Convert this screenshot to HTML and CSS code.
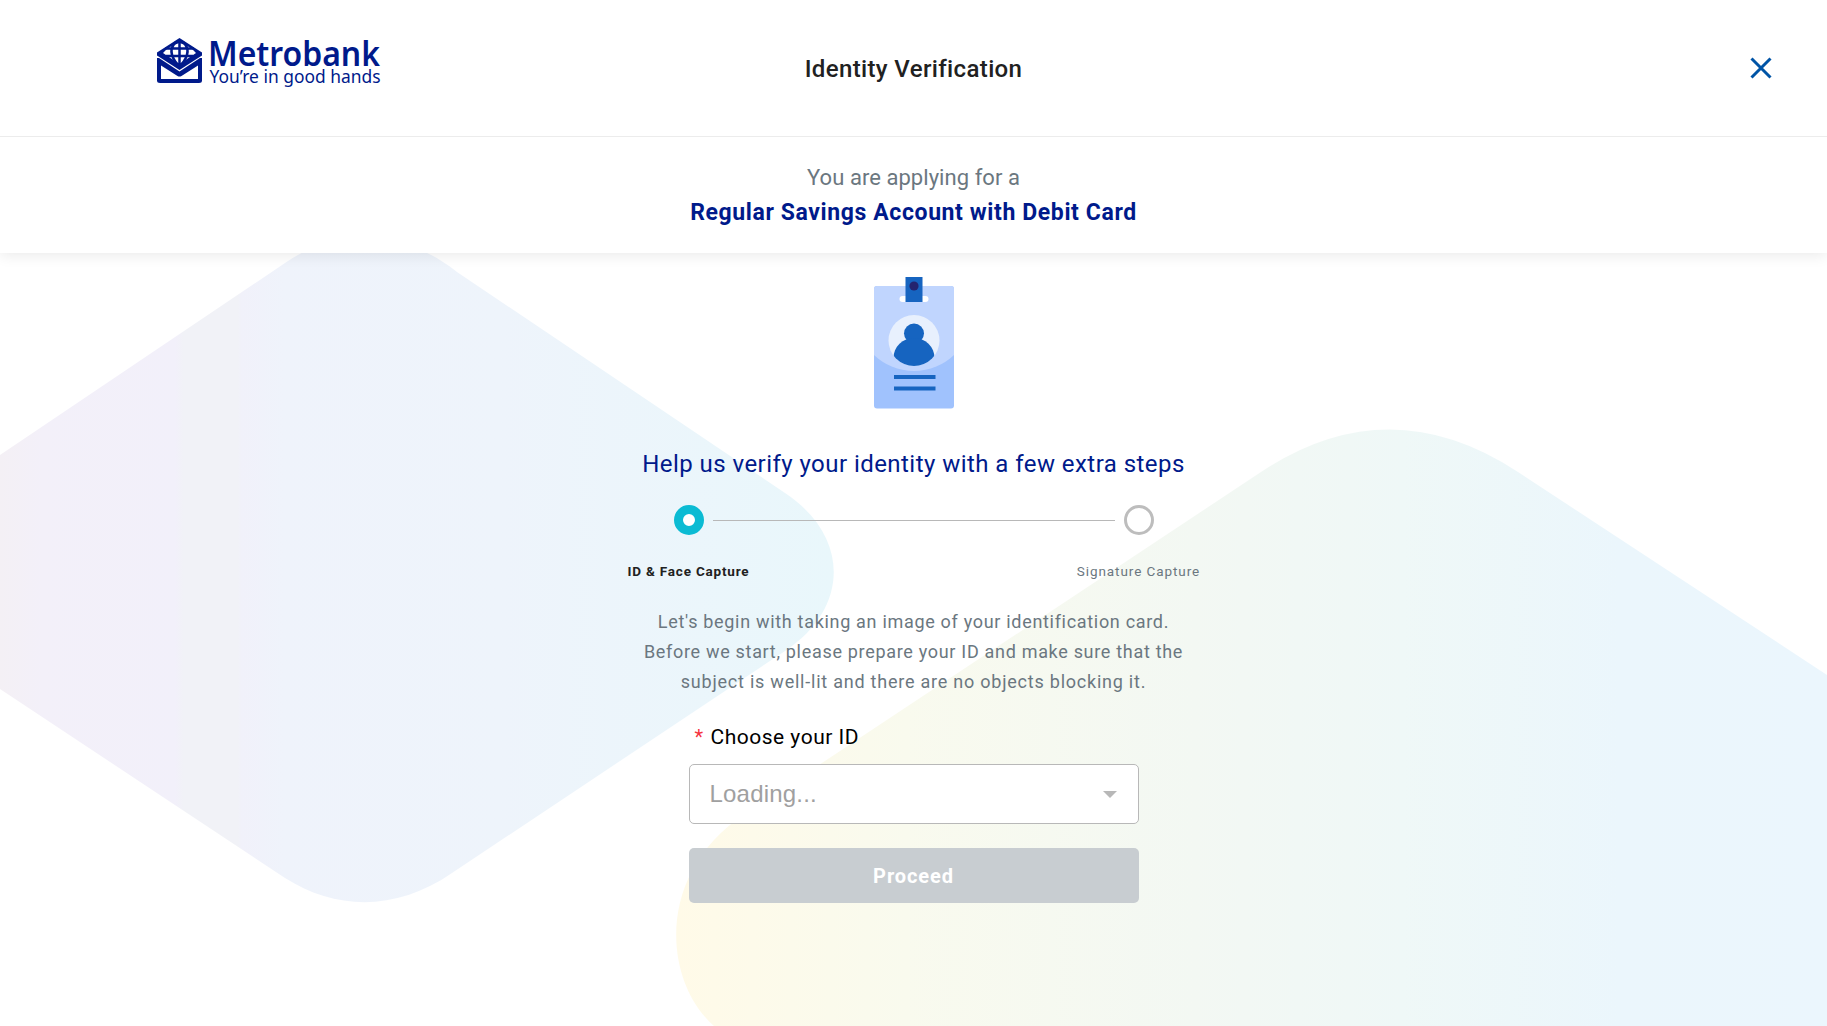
FILE: index.html
```html
<!DOCTYPE html>
<html lang="en">
<head>
<meta charset="utf-8">
<title>Identity Verification</title>
<link rel="stylesheet" href="styles.css">
</head>
<body>
<svg class="backdrop" viewBox="0 0 1827 1026" aria-hidden="true">
  <defs>
    <linearGradient id="cool" gradientUnits="userSpaceOnUse" x1="0" y1="0" x2="834" y2="0">
      <stop offset="0" stop-color="#f4f0f5"/><stop offset=".05" stop-color="#f3f0f9"/>
      <stop offset=".21" stop-color="#f2f0fa"/><stop offset=".22" stop-color="#f1f2f7"/>
      <stop offset=".285" stop-color="#f1f2f7"/><stop offset=".29" stop-color="#f1f1fa"/>
      <stop offset=".34" stop-color="#eff3fb"/>
      <stop offset=".6" stop-color="#eef4fb"/><stop offset="1" stop-color="#e9f7fb"/>
    </linearGradient>
    <linearGradient id="warm" gradientUnits="userSpaceOnUse" x1="676" y1="0" x2="1827" y2="0">
      <stop offset="0" stop-color="#fffae8"/><stop offset=".2" stop-color="#f9faee"/>
      <stop offset=".45" stop-color="#f3f8f3"/><stop offset=".63" stop-color="#eff8f7"/>
      <stop offset=".82" stop-color="#ebf6fc"/><stop offset="1" stop-color="#ebf6fd"/>
    </linearGradient>
  </defs>
  <path fill="url(#cool)" d="M0 455L285 263C335 228 402 228 457 272L785 493C850 536 850 608 785 651L452 873C397 911 337 911 285 878L0 689Z"/>
  <path fill="url(#warm)" d="M745 814L1261 472Q1389 387 1518 472L1827 675V1026H714C662 980 656 872 745 814Z"/>
</svg>

<header class="topbar">
  <svg class="logo" viewBox="0 0 240 56" role="img" aria-label="Metrobank">
    <path class="navy" d="M22.500 1L45 15.500V18.500L22.500 33L0 18.500V15.500Z"/>
    <path fill="#fff" d="M6 16Q12 9 22.500 6Q33 9 39 16L22.500 27Z"/>
    <path class="globe" d="M8 11.500H37M9 19H36M22.500 5V28M19 5Q9 14 21 28M26 5Q36 14 24 28"/>
    <path class="navy" fill-rule="evenodd" d="M0 21L2 21L22.500 34.500L43 21L45 21V43.500Q45 46 42 46H3Q0 46 0 43.500ZM4 28.500V42H41V28.500L24.500 39Q22.500 40 20.500 39Z"/>
    <text class="brand" x="51" y="28.500" textLength="172" lengthAdjust="spacingAndGlyphs">Metrobank</text>
    <text class="tagline" x="52.500" y="46" textLength="171" lengthAdjust="spacingAndGlyphs">You’re in good hands</text>
  </svg>
  <h1 class="title">Identity Verification</h1>
  <button class="close" aria-label="Close">
    <svg viewBox="0 0 22 22"><path d="M1.500 1.500L20.500 20.500M20.500 1.500L1.500 20.500"/></svg>
  </button>
</header>

<section class="product">
  <p class="product-lead">You are applying for a</p>
  <p class="product-name">Regular Savings Account with Debit Card</p>
</section>

<main class="content">
  <svg class="badge" viewBox="0 0 82 134" aria-hidden="true">
    <defs><clipPath id="card"><rect x="1" y="10" width="80" height="122.500" rx="3"/></clipPath>
    <clipPath id="photo"><circle cx="41" cy="64.500" r="25.500"/></clipPath></defs>
    <g clip-path="url(#card)">
      <rect x="1" y="10" width="80" height="123" fill="#a0c2fd"/>
      <circle cx="41" cy="37" r="58" fill="#c0d5fe"/>
    </g>
    <rect x="26.500" y="20" width="29" height="6" rx="3" fill="#fff"/>
    <circle cx="41" cy="64.500" r="25.500" fill="#e8f0fd"/>
    <g clip-path="url(#photo)" fill="#1664c0"><circle cx="41" cy="57.500" r="10"/><ellipse cx="41" cy="82" rx="20.500" ry="20"/></g>
    <rect x="32.500" y="1" width="17" height="25" fill="#1664c0"/>
    <circle cx="41" cy="10" r="4.600" fill="#24246f"/>
    <path d="M21 101H62.500M21 112.500H62.500" stroke="#1664c0" stroke-width="4"/>
  </svg>

  <h2 class="heading">Help us verify your identity with a few extra steps</h2>

  <ol class="steps">
    <li class="step active"><span class="dot"></span><span class="step-label">ID &amp; Face Capture</span></li>
    <li class="rail"></li>
    <li class="step"><span class="dot"></span><span class="step-label">Signature Capture</span></li>
  </ol>

  <p class="intro">Let's begin with taking an image of your identification card.<br>Before we start, please prepare your ID and make sure that the<br><span class="intro-end">subject is well-lit and there are no objects blocking it.</span></p>

  <form class="form">
    <label class="label"><span class="required">*</span><span class="label-text">Choose your ID</span></label>
    <div class="select"><span class="placeholder">Loading...</span><span class="arrow"></span></div>
    <button class="proceed" type="button" disabled>Proceed</button>
  </form>
</main>
</body>
</html>
```
FILE: styles.css
```css
* { box-sizing: border-box; }
body { margin: 0; height: 1026px; overflow: hidden; background: #fff; font-family: Roboto, "Liberation Sans", sans-serif; color: #212121; }
h1, h2, p, ol { margin: 0; padding: 0; font-weight: 400; }
button { border: 0; padding: 0; font-family: inherit; }
.backdrop { position: absolute; inset: 0; width: 1827px; height: 1026px; z-index: -1; }

.topbar { position: relative; z-index: 1; display: grid; grid-template-columns: 1fr auto 1fr; align-items: center; height: 137px; padding: 0 55px 0 157px; background: #fff; border-bottom: 1px solid #ececec; }
.logo { width: 240px; height: 56px; margin-bottom: 7px; overflow: visible; }
.navy { fill: #001a8b; }
.globe { fill: none; stroke: #001a8b; stroke-width: 2.5; }
.brand { font: 600 35px "Noto Sans", "Open Sans", sans-serif; fill: #001a8b; }
.tagline { font: 400 18px "Noto Sans", "Open Sans", sans-serif; fill: #001a8b; }
.title { margin: 2px 0 0 -102px; font-size: 24px; font-weight: 500; letter-spacing: .37px; line-height: 32px; }
.close { justify-self: end; width: 22px; height: 22px; background: none; }
.close svg { display: block; width: 22px; height: 22px; fill: none; stroke: #0054a6; stroke-width: 3; }

.product { height: 116px; padding-top: 25px; background: #fff; text-align: center; box-shadow: 0 2px 14px rgba(0, 0, 0, .09); }
.product-lead { font-size: 22px; line-height: 32px; letter-spacing: .05px; color: #6b7780; }
.product-name { font-size: 23px; line-height: 38px; font-weight: 700; letter-spacing: .61px; color: #001a8b; }

.content { display: flex; flex-direction: column; align-items: center; padding-top: 23px; }
.badge { width: 82px; height: 134px; }
.heading { margin-top: 38px; font-size: 24px; line-height: 32px; letter-spacing: .45px; color: #001a8b; }
.steps { display: flex; justify-content: center; width: 600px; margin-top: 25px; list-style: none; }
.step { display: flex; flex-direction: column; align-items: center; width: 150px; height: 78px; }
.rail { width: 402px; height: 1px; margin: 15px -51px 0; background: #b8b8b8; }
.dot { width: 30px; height: 30px; border: 3px solid #bdbdbd; border-radius: 50%; background: #fff; }
.active .dot { border: 9px solid #0bbbd3; }
.step-label { margin-top: 26px; font-size: 13.5px; line-height: 20px; letter-spacing: .92px; color: #6b7780; white-space: nowrap; }
.active .step-label { font-weight: 700; letter-spacing: .8px; color: #212121; }
.intro { margin-top: 24px; font-size: 18px; line-height: 30px; letter-spacing: .69px; color: #6b7780; text-align: center; white-space: nowrap; }
.intro-end { letter-spacing: .77px; }
.form { width: 450px; margin-top: 24px; }
.label { display: flex; align-items: center; height: 32px; padding-left: 6px; font-size: 21px; letter-spacing: .5px; color: #000; }
.required { width: 16px; color: #f5333f; font-size: 20px; }
.select { display: flex; align-items: center; justify-content: space-between; height: 60px; margin-top: 11px; padding: 0 21px 0 20px; background: #fff; border: 1px solid #b8b8b8; border-radius: 5px; }
.placeholder { font: 24px "Liberation Sans", sans-serif; letter-spacing: .2px; color: #a0a0a0; }
.arrow { border: 7px solid transparent; border-top-color: #b8b8b8; border-bottom: 0; }
.proceed { display: block; width: 450px; height: 55px; margin-top: 24px; border-radius: 5px; background: #c8cdd1; color: #fff; font-size: 20px; font-weight: 700; letter-spacing: .9px; }
```
